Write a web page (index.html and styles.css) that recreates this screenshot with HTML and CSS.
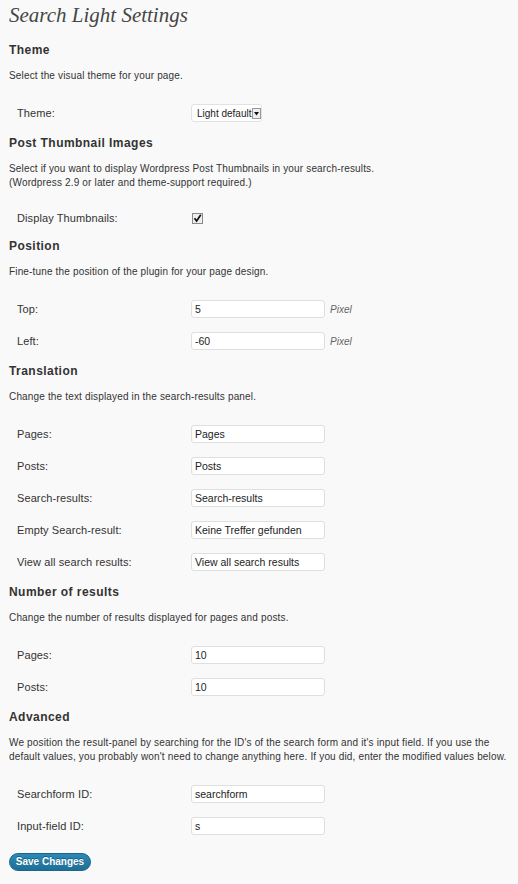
FILE: index.html
```html
<!DOCTYPE html>
<html>
<head>
<meta charset="utf-8">
<link rel="stylesheet" href="styles.css">
</head>
<body>
<div class="wrap">
  <h2 class="title">Search Light Settings</h2>

  <h3 class="sec">Theme</h3>
  <p class="desc">Select the visual theme for your page.</p>
  <div class="rows">
    <div class="row"><span class="label">Theme:</span>
      <span class="select"><span class="sel-text">Light default</span><span class="sel-arrow"><svg width="7" height="9" viewBox="0 0 7 9"><path d="M1 3 L6 3 L3.5 6.5 Z" fill="#111"/></svg></span></span>
    </div>
  </div>

  <h3 class="sec">Post Thumbnail Images</h3>
  <p class="desc">Select if you want to display Wordpress Post Thumbnails in your search-results.<br>(Wordpress 2.9 or later and theme-support required.)</p>
  <div class="rows">
    <div class="row row-check"><span class="label">Display Thumbnails:</span>
      <span class="check"><svg width="11" height="11" viewBox="0 0 11 11"><rect x="0.5" y="0.5" width="10" height="10" fill="#eee" stroke="#8a8a8a"/><path d="M2.5 5.2 L4.6 8 L8.8 1.8" fill="none" stroke="#111" stroke-width="1.7"/></svg></span>
    </div>
  </div>

  <h3 class="sec">Position</h3>
  <p class="desc">Fine-tune the position of the plugin for your page design.</p>
  <div class="rows">
    <div class="row"><span class="label">Top:</span><span class="input">5</span><span class="unit">Pixel</span></div>
    <div class="row"><span class="label">Left:</span><span class="input">-60</span><span class="unit">Pixel</span></div>
  </div>

  <h3 class="sec">Translation</h3>
  <p class="desc">Change the text displayed in the search-results panel.</p>
  <div class="rows">
    <div class="row"><span class="label">Pages:</span><span class="input">Pages</span></div>
    <div class="row"><span class="label">Posts:</span><span class="input">Posts</span></div>
    <div class="row"><span class="label">Search-results:</span><span class="input">Search-results</span></div>
    <div class="row"><span class="label">Empty Search-result:</span><span class="input">Keine Treffer gefunden</span></div>
    <div class="row"><span class="label">View all search results:</span><span class="input">View all search results</span></div>
  </div>

  <h3 class="sec">Number of results</h3>
  <p class="desc">Change the number of results displayed for pages and posts.</p>
  <div class="rows">
    <div class="row"><span class="label">Pages:</span><span class="input">10</span></div>
    <div class="row"><span class="label">Posts:</span><span class="input">10</span></div>
  </div>

  <h3 class="sec">Advanced</h3>
  <p class="desc">We position the result-panel by searching for the ID's of the search form and it's input field. If you use the default values, you probably won't need to change anything here. If you did, enter the modified values below.</p>
  <div class="rows">
    <div class="row"><span class="label">Searchform ID:</span><span class="input">searchform</span></div>
    <div class="row"><span class="label">Input-field ID:</span><span class="input">s</span></div>
  </div>

  <div class="actions"><span class="button">Save Changes</span></div>
</div>
</body>
</html>
```
FILE: styles.css
```css
html, body {
  margin: 0;
  padding: 0;
  background: #f9f9f9;
}
body {
  font-family: "Liberation Sans", Arial, sans-serif;
  color: #333;
}
.wrap {
  padding: 0 9px;
}
.title {
  margin: 0;
  height: 30px;
  line-height: 30px;
  font-family: "Liberation Serif", Georgia, serif;
  font-style: italic;
  font-weight: normal;
  font-size: 21px;
  color: #464646;
}
.sec {
  margin: 12px 0 0;
  line-height: 16px;
  font-size: 12px;
  font-weight: bold;
  letter-spacing: 0.45px;
  color: #333;
}
.rows + .sec {
  margin-top: 6px;
}
.desc {
  margin: 11px 0 14px;
  font-size: 10px;
  letter-spacing: 0.16px;
  line-height: 14px;
}
.rows {
  padding-left: 8px;
}
.row {
  display: flex;
  align-items: center;
  height: 32px;
}
.row-check {
  height: 28px;
}
.label {
  width: 174px;
  flex: none;
  font-size: 11px;
  letter-spacing: 0.1px;
}
.input {
  box-sizing: border-box;
  width: 134px;
  height: 18px;
  padding: 0 3px;
  background: #fff;
  border: 1px solid #dfdfdf;
  border-radius: 3px;
  font-size: 10.5px;
  line-height: 16px;
  color: #222;
}
.unit {
  margin-left: 5px;
  font-size: 10px;
  font-style: italic;
  color: #666;
}
.select {
  box-sizing: border-box;
  display: flex;
  align-items: center;
  width: 71px;
  height: 18px;
  padding: 0 1px 0 5px;
  background: #fff;
  border: 1px solid #e2e2e2;
  border-radius: 3px;
  font-size: 10px;
  color: #222;
}
.sel-text {
  flex: 1;
  white-space: nowrap;
}
.sel-arrow {
  box-sizing: border-box;
  width: 9px;
  height: 11px;
  display: flex;
  align-items: center;
  justify-content: center;
  border: 1px solid #999;
  background: #eee;
}
.check {
  display: flex;
  margin-left: 1px;
}
.actions {
  margin-top: 9px;
}
.button {
  display: inline-block;
  box-sizing: border-box;
  width: 82px;
  height: 18px;
  text-align: center;
  border-radius: 9px;
  background: linear-gradient(#2a8ab8, #1f6f95);
  border: 1px solid #1d6488;
  color: #fff;
  font-size: 10px;
  font-weight: bold;
  line-height: 16px;
  text-shadow: 0 -1px 0 rgba(0,0,0,0.3);
}
```
